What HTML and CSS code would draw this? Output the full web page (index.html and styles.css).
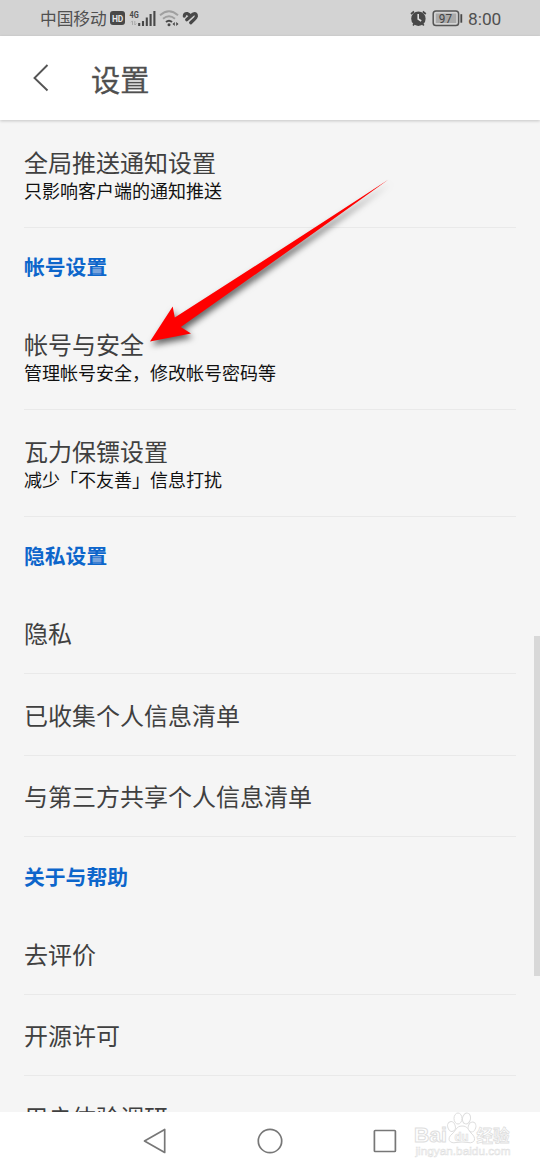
FILE: index.html
```html
<!DOCTYPE html>
<html lang="zh-CN">
<head>
<meta charset="utf-8">
<title>设置</title>
<link rel="stylesheet" href="styles.css">
</head>
<body>
<div class="phone">
  <header class="status">
    <span class="carrier">中国移动</span>
    <svg class="status-icons" width="92" height="36" viewBox="0 0 92 36">
      <rect x="0" y="11" width="15" height="14" rx="3" fill="#484848"/>
      <text class="hd" x="1.9" y="21.7" textLength="11.4" lengthAdjust="spacingAndGlyphs">HD</text>
      <text class="net" x="19.6" y="17.6" textLength="9.2" lengthAdjust="spacingAndGlyphs">4G</text>
      <path d="M22.500 25v-4M21 22.300l1.500-1.500M24.800 21v4M24.800 25l1.500-1.500" fill="none" stroke="#aaa" stroke-width="1"/>
      <path d="M29.200 26v-3M33 26v-5M36.800 26v-8.600M40.600 26V14M44.400 26V11" fill="none" stroke="#484848" stroke-width="2.100"/>
      <g fill="none" stroke="#a0a0a0" stroke-width="1.900">
        <path d="M50 15.300Q59 7.300 68 15.300"/>
        <path d="M53 18.700Q59 13.600 65 18.700"/>
      </g>
      <path d="M56 22Q59 19.500 62 22" fill="none" stroke="#484848" stroke-width="2"/>
      <circle cx="59" cy="24.700" r="1.500" fill="#484848"/>
      <path d="M62.500 24l2.300-2v4zM68.500 24l-2.300-2v4z" fill="#484848"/>
      <g fill="none" stroke="#484848" stroke-width="3.200" stroke-linecap="round">
        <path d="M74.300 16.200Q74.600 13.200 77.200 13.600L79.500 14.800"/>
        <path d="M76.700 19.700L83 14.200Q86.500 12.500 86.400 16.200Q86 17.800 84.500 19.200L80.700 22.700"/>
      </g>
    </svg>
    <span class="spacer"></span>
    <svg class="status-icons" width="56" height="36" viewBox="0 0 56 36">
      <circle cx="8.400" cy="18.700" r="7.200" fill="#484848"/>
      <path d="M1 14l3-2.500M15.800 14l-3-2.500M3 25.500l1.500-2M13.800 25.500l-1.500-2" stroke="#484848" stroke-width="1.700"/>
      <path d="M8.200 14v5l3 2" fill="none" stroke="#ddd" stroke-width="1.600"/>
      <rect x="23.200" y="10.900" width="25.400" height="14.600" rx="2.800" fill="none" stroke="#555" stroke-width="1.500"/>
      <rect x="25.800" y="13.500" width="20.400" height="9.500" fill="#aaa"/>
      <path d="M51.300 14.200v8.500" stroke="#484848" stroke-width="1.800"/>
      <text class="charge" x="28.800" y="22.700" textLength="13.200" lengthAdjust="spacingAndGlyphs">97</text>
    </svg>
    <span class="clock">8:00</span>
  </header>

  <div class="appbar">
    <svg class="back" width="18" height="28" viewBox="0 0 18 28"><path d="M15.500 1L2.500 14l13 12.500" fill="none" stroke="#555" stroke-width="1.900"/></svg>
    <h1 class="title">设置</h1>
  </div>

  <main class="list">
    <div class="row double"><span class="name">全局推送通知设置</span><span class="desc">只影响客户端的通知推送</span></div>
    <h2 class="section">帐号设置</h2>
    <div class="row double"><span class="name">帐号与安全</span><span class="desc">管理帐号安全，修改帐号密码等</span></div>
    <div class="row double"><span class="name">瓦力保镖设置</span><span class="desc">减少「不友善」信息打扰</span></div>
    <h2 class="section">隐私设置</h2>
    <div class="row"><span class="name">隐私</span></div>
    <div class="row"><span class="name">已收集个人信息清单</span></div>
    <div class="row"><span class="name">与第三方共享个人信息清单</span></div>
    <h2 class="section">关于与帮助</h2>
    <div class="row"><span class="name">去评价</span></div>
    <div class="row"><span class="name">开源许可</span></div>
    <div class="row"><span class="name">用户体验调研</span></div>
    <span class="scrollbar"></span>
  </main>

  <nav class="navbar">
    <svg width="26" height="28" viewBox="0 0 26 28"><path d="M22.700 2.500v23L2.500 14z" fill="none" stroke="#777" stroke-width="1.700" stroke-linejoin="round"/></svg>
    <svg width="26" height="28" viewBox="0 0 26 28"><circle cx="13" cy="14" r="11.700" fill="none" stroke="#777" stroke-width="1.700"/></svg>
    <svg width="26" height="28" viewBox="0 0 26 28"><rect x="2.400" y="3.500" width="21" height="21" rx=".8" fill="none" stroke="#777" stroke-width="1.700"/></svg>
  </nav>

  <svg class="pointer" width="270" height="190" viewBox="0 0 270 190">
    <path d="M10 170.500L32.700 135.500L34.800 146.500Q150 73 248.500 8.500Q152 78 40.800 156L51 162.500z" fill="#f00"/>
  </svg>

  <svg class="watermark" width="110" height="55" viewBox="0 0 110 55">
    <g fill="#fff" stroke="#dedede" stroke-width="1">
      <text class="brand" x="3" y="35.500" textLength="33" lengthAdjust="spacingAndGlyphs">Bai</text>
      <ellipse cx="40.500" cy="20.500" rx="3.800" ry="5" transform="rotate(-15 40.500 20.500)"/>
      <ellipse cx="47" cy="12.500" rx="4" ry="5.500"/>
      <ellipse cx="55.500" cy="12.500" rx="4" ry="5.500" transform="rotate(12 55.500 12.500)"/>
      <ellipse cx="61" cy="21" rx="3.800" ry="5" transform="rotate(20 61 21)"/>
      <path d="M51 20C45 20 45 25 41 28C35 33 39 38 45 36.500Q51 35.500 57 36.500C64 38 66 32 60 27C57 24 57 20 51 20z"/>
      <text class="du" x="43.500" y="34.500" textLength="14" lengthAdjust="spacingAndGlyphs">du</text>
      <text class="cn" x="65.500" y="35.500" textLength="33" lengthAdjust="spacingAndGlyphs">经验</text>
      <text class="site" x="4.500" y="48.500" textLength="95" lengthAdjust="spacingAndGlyphs">jingyan.baidu.com</text>
    </g>
  </svg>
</div>
</body>
</html>
```
FILE: styles.css
```css
* { box-sizing: border-box; }
body {
  margin: 0;
  font-family: "Noto Sans CJK SC", sans-serif;
}
.phone {
  position: relative;
  display: flex;
  flex-direction: column;
  width: 540px;
  height: 1170px;
  overflow: hidden;
  background: #f5f5f5;
}
.status {
  display: flex;
  align-items: center;
  flex: none;
  height: 36px;
  padding: 0 37px 0 40px;
  background: #d3d3d3;
  color: #505050;
}
.carrier { width: 70px; font-size: 16.7px; line-height: 36px; white-space: nowrap; }
.status-icons { flex: none; display: block; font-family: Roboto, sans-serif; }
.spacer { flex: 1; }
.clock { width: 35px; font: 17.3px/36px Roboto, sans-serif; white-space: nowrap; margin-left: 2px; padding-top: 2px; }
.hd { font-size: 9.5px; font-weight: 700; fill: #e6e6e6; }
.net { font-size: 9px; font-weight: 700; fill: #484848; }
.charge { font-size: 13px; fill: #444; }
.appbar {
  position: relative;
  z-index: 1;
  display: flex;
  align-items: center;
  flex: none;
  height: 84px;
  padding-left: 32px;
  background: #fff;
  box-shadow: 0 1px 3px rgba(0, 0, 0, .2);
}
.title { margin: 0 0 1px 41px; font-size: 29.2px; line-height: 40px; font-weight: 400; color: #505050; -webkit-text-stroke: .3px #505050; }
.list {
  position: relative;
  flex: 1;
  min-height: 0;
  overflow: hidden;
  padding: 1.5px 24px 0;
}
.row {
  display: flex;
  flex-direction: column;
  height: 81.5px;
  padding-top: 24.5px;
  border-bottom: 1px solid #e9e9e9;
}
.double { height: 106.4px; }
.name { font-size: 24px; line-height: 32px; color: #404040; }
.desc { font-size: 18px; line-height: 24px; color: #111; }
.section {
  height: 76px;
  margin: 0;
  padding-top: 23.5px;
  font-size: 20.8px;
  line-height: 30px;
  font-weight: 700;
  color: #0d66cb;
}
.scrollbar {
  position: absolute;
  top: 516px;
  right: 0;
  width: 6px;
  height: 340px;
  background: #d8d8d8;
}
.navbar {
  display: flex;
  align-items: center;
  justify-content: center;
  flex: none;
  gap: 89px;
  height: 58px;
  background: #fff;
}
.pointer {
  position: absolute;
  left: 140px;
  top: 171px;
  z-index: 2;
  filter: drop-shadow(2px 4px 3px rgba(0, 0, 0, .6));
}
.watermark { position: absolute; left: 411px; top: 1106px; font-family: "Liberation Sans", sans-serif; }
.brand { font-size: 21px; font-weight: 700; }
.du { font-size: 12px; font-weight: 700; stroke-width: .7px; }
.cn { font: 700 17px "Noto Sans CJK SC", sans-serif; stroke-width: .8px; }
.site { font-size: 11px; stroke-width: .5px; }
```
